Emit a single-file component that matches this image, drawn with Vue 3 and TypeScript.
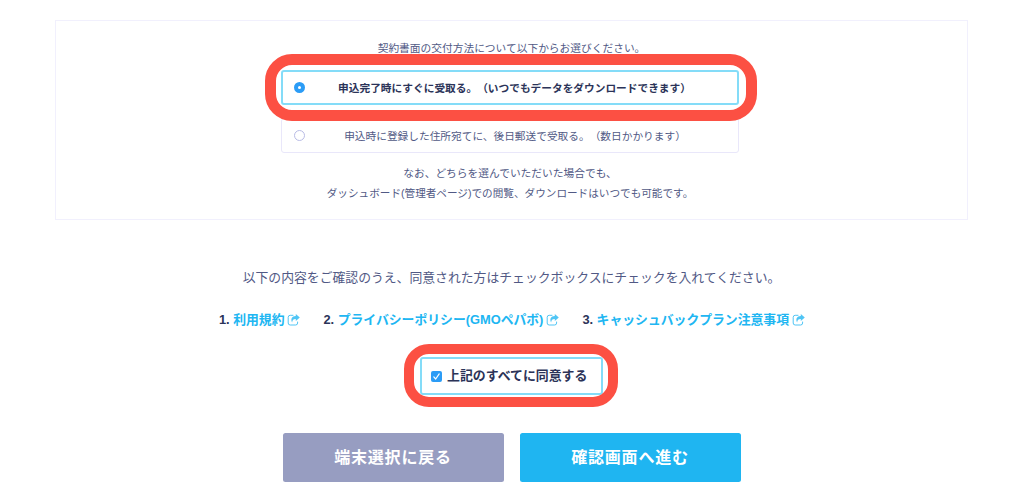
<script setup lang="ts">
import { ref } from 'vue'

interface Delivery {
  id: string
  label: string
}

interface Doc {
  no: number
  label: string
}

const deliveries: Delivery[] = [
  { id: 'download', label: '申込完了時にすぐに受取る。（いつでもデータをダウンロードできます）' },
  { id: 'post', label: '申込時に登録した住所宛てに、後日郵送で受取る。（数日かかります）' },
]
const docs: Doc[] = [
  { no: 1, label: '利用規約' },
  { no: 2, label: 'プライバシーポリシー(GMOペパボ)' },
  { no: 3, label: 'キャッシュバックプラン注意事項' },
]
const selected = ref('download')
const agreed = ref(true)
</script>

<template>
  <main class="page">
    <section class="panel">
      <p class="small lead">契約書面の交付方法について以下からお選びください。</p>
      <div class="options">
        <div
          v-for="d in deliveries"
          :key="d.id"
          class="option"
          :class="{ active: selected === d.id }"
          @click="selected = d.id"
        >
          <span class="radio"></span>
          <span class="option-label">{{ d.label }}</span>
          <span v-if="d.id === 'download'" class="marker marker-option"></span>
        </div>
      </div>
      <p class="small note">なお、どちらを選んでいただいた場合でも、</p>
      <p class="small note second">ダッシュボード(管理者ページ)での閲覧、ダウンロードはいつでも可能です。</p>
    </section>

    <p class="confirm">以下の内容をご確認のうえ、同意された方はチェックボックスにチェックを入れてください。</p>

    <ul class="docs">
      <li v-for="doc in docs" :key="doc.no" class="doc">
        <span class="num">{{ doc.no }}.</span>
        <a class="link">{{ doc.label }}</a>
        <svg class="share" viewBox="0 0 13 12">
          <path d="M6.4 1.3H3.2A2 2 0 0 0 1.2 3.3V9A2 2 0 0 0 3.2 11H8.6A2 2 0 0 0 10.6 9V7.6" fill="none" stroke="currentColor" stroke-width="1" />
          <path d="M8.8 0L12.8 3.5L8.8 7V4.9C6.5 4.8 5.4 5.8 5.1 8.4C3.4 5 4.7 2.2 8.8 2Z" fill="currentColor" />
        </svg>
      </li>
    </ul>

    <div class="agree" @click="agreed = !agreed">
      <span class="check">
        <svg v-if="agreed" viewBox="0 0 11 11">
          <path d="M2.8 5.9L4.7 8L8.2 2.9" fill="none" stroke="#fff" stroke-width="1.2" stroke-linecap="round" stroke-linejoin="round" />
        </svg>
      </span>
      <span class="agree-label">上記のすべてに同意する</span>
      <span class="marker marker-agree"></span>
    </div>

    <div class="buttons">
      <button class="btn back" type="button">端末選択に戻る</button>
      <button class="btn next" type="button">確認画面へ進む</button>
    </div>
  </main>
</template>

<style>
body {
  background: #fff;
}
</style>

<style scoped>
.page {
  box-sizing: border-box;
  width: 1024px;
  height: 493px;
  padding-top: 20px;
  overflow: hidden;
  font-family: "Liberation Sans", "Noto Sans CJK JP", sans-serif;
  color: #515985;
  text-spacing-trim: space-all;
}
p {
  margin: 0;
  white-space: nowrap;
}
.panel {
  box-sizing: border-box;
  width: 913px;
  height: 200px;
  margin-left: 55px;
  padding-top: 18px;
  border: 1px solid #f1f0fd;
}
.small {
  height: 20px;
  line-height: 19px;
  font-size: 10.72px;
  text-align: center;
}
.options {
  display: flex;
  flex-direction: column;
  gap: 13px;
  width: 458px;
  margin: 11px 0 0 225px;
}
.option {
  position: relative;
  box-sizing: border-box;
  display: flex;
  align-items: center;
  height: 35px;
  padding-left: 12px;
  border: 1px solid #e9e7fa;
  border-radius: 3px;
}
.option.active {
  z-index: 1;
  padding-left: 11px;
  border: 2px solid #84dcf8;
}
.radio {
  box-sizing: border-box;
  width: 11px;
  height: 11px;
  border: 1px solid #b9bce6;
  border-radius: 50%;
}
.active .radio {
  border: 4px solid #2b9cf6;
}
.option-label {
  flex: 1;
  padding-right: 28px;
  padding-left: 15px;
  font-size: 10.69px;
  line-height: 20px;
  text-align: center;
  white-space: nowrap;
}
.active .option-label {
  color: #2b3358;
  font-weight: 700;
}
.marker {
  position: absolute;
  box-sizing: border-box;
  pointer-events: none;
}
.marker-option {
  top: -18px;
  left: -18px;
  width: 492px;
  height: 66.5px;
  border: 11px solid #fc5043;
  border-radius: 27px;
}
.note {
  margin-top: 11px;
  padding-right: 3px;
}
.note.second {
  margin-top: 0;
  padding-right: 3px;
  font-size: 10.62px;
}
.confirm {
  margin-top: 47px;
  padding-right: 1px;
  font-size: 12.84px;
  line-height: 22px;
  text-align: center;
}
.docs {
  display: flex;
  justify-content: center;
  gap: 23px;
  margin: 20px 0 0;
  padding: 0;
  list-style: none;
}
.doc {
  display: flex;
  align-items: center;
  height: 22px;
  font-size: 12.84px;
  font-weight: 700;
  line-height: 22px;
  white-space: nowrap;
}
.num {
  margin-right: 3.5px;
  color: #2b3358;
}
.link {
  color: #20b6f2;
}
.share {
  width: 13px;
  height: 12px;
  margin: -1px 0 0 3px;
  color: #4fc5f5;
}
.agree {
  position: relative;
  box-sizing: border-box;
  display: flex;
  align-items: center;
  width: 183px;
  height: 38px;
  margin: 26px 0 0 420px;
  padding-left: 8.5px;
  border: 2px solid #84dcf8;
  border-radius: 3px;
}
.check {
  width: 11px;
  height: 11px;
  border-radius: 2px;
  background: #2b9cf6;
}
.check svg {
  display: block;
}
.agree-label {
  margin-left: 5.5px;
  color: #2b3358;
  font-size: 12.9px;
  font-weight: 700;
  line-height: 22px;
  white-space: nowrap;
}
.marker-agree {
  top: -15.5px;
  left: -18px;
  width: 214px;
  height: 63.5px;
  border: 10.5px solid #fc5043;
  border-radius: 25px;
}
.buttons {
  display: flex;
  justify-content: center;
  gap: 16px;
  margin: 38.4px 1px 0 0;
}
.btn {
  width: 221px;
  height: 48.3px;
  padding: 1px 0 0;
  border: 0;
  border-radius: 2.5px;
  color: #fff;
  font-family: inherit;
  font-size: 16px;
  font-weight: 700;
  letter-spacing: 0.8px;
  line-height: 48px;
}
.back {
  background: #979dc1;
}
.next {
  background: #1fb5f1;
}
</style>
